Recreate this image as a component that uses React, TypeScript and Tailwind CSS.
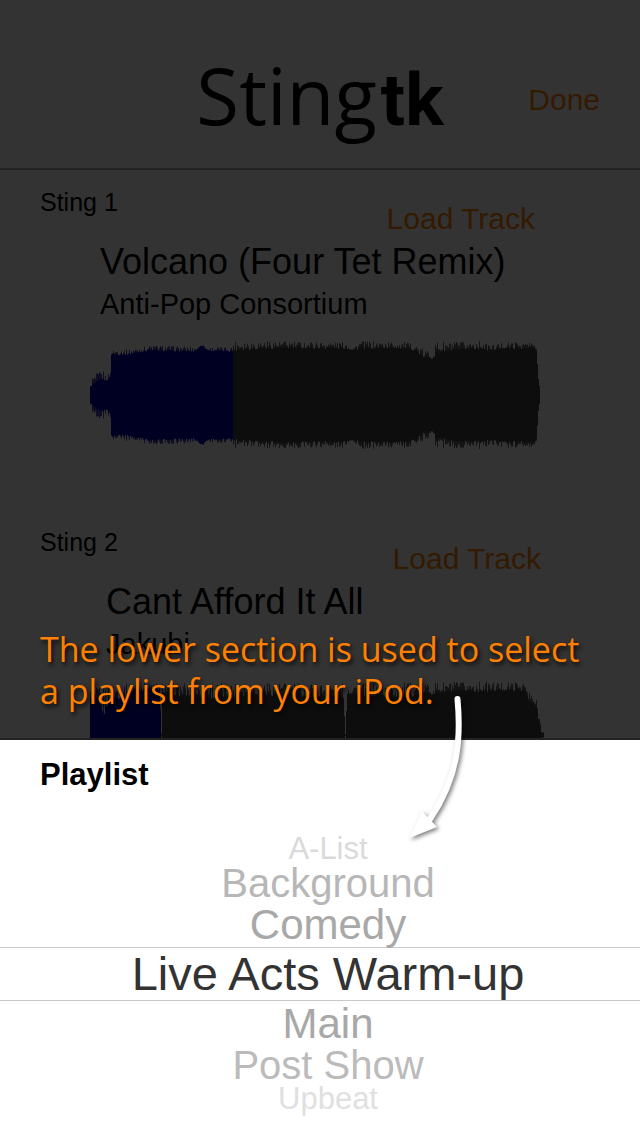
import React from "react";

type Level = [x: number, low: number, high: number];

const noise = (n: number) => {
  const v = Math.sin(n * 127.1 + 311.7) * 43758.5453;
  return v - Math.floor(v);
};

function wavePath(levels: Level[], from: number, to: number, mid: number, mix: number) {
  const top: string[] = [];
  const bottom: string[] = [];
  for (let x = from; x < to; x += 1) {
    let i = 0;
    while (i < levels.length - 2 && levels[i + 1][0] <= x) i += 1;
    const [x0, l0, h0] = levels[i];
    const [x1, l1, h1] = levels[i + 1];
    const t = (x - x0) / (x1 - x0);
    const low = l0 + (l1 - l0) * t;
    const high = h0 + (h1 - h0) * t;
    const peak = low + (high - low) * noise(x) * mix;
    top.push(`L${x} ${(mid - peak).toFixed(1)}L${x + 1} ${(mid - peak).toFixed(1)}`);
    bottom.unshift(`L${x + 1} ${(mid + peak).toFixed(1)}L${x} ${(mid + peak).toFixed(1)}`);
  }
  return `M${from} ${mid}${top.join("")}L${to} ${mid}${bottom.join("")}Z`;
}

const volcano: Level[] = [
  [0, 7, 10], [1, 8, 18], [8, 12, 23], [12, 14, 26], [16, 14, 18], [20, 18, 24],
  [21, 40, 45], [40, 40, 46], [52, 43, 48], [60, 44, 50], [104, 43, 48],
  [108, 46, 48], [110, 49, 50], [113, 49, 50], [116, 44, 48], [142, 43, 48],
  [143, 44, 54], [180, 46, 54], [255, 46, 53], [263, 44, 48], [270, 46, 54],
  [315, 46, 53], [325, 44, 50], [333, 36, 46], [343, 36, 44], [346, 41, 54],
  [360, 43, 53], [390, 46, 54], [400, 44, 50], [415, 46, 53], [444, 46, 53],
  [446, 42, 46], [448, 16, 18], [450, 1, 1],
];

const jakubi: Level[] = [
  [0, 35, 45], [8, 30, 48], [13, 15, 48], [18, 32, 50], [30, 36, 51], [45, 44, 52],
  [69, 44, 52], [71, 0, 2], [72, 42, 52], [100, 36, 52], [144, 36, 53],
  [160, 40, 53], [253, 36, 52], [255, 0, 2], [257, 40, 52], [300, 36, 52],
  [360, 42, 53], [434, 44, 53], [438, 32, 45], [442, 30, 40], [446, 24, 36],
  [451, 3, 8], [454, 1, 1],
];

function Waveform({ levels, played, width, label }: { levels: Level[]; played: number; width: number; label: string }) {
  return (
    <svg role="img" aria-label={label} width={width} height="112" viewBox={`0 0 ${width} 112`}>
      <path d={wavePath(levels, 0, played, 56, 1)} fill="#000090" opacity="0.7" />
      <path d={wavePath(levels, 0, played, 56, 0.3)} fill="#0000b0" />
      <path d={wavePath(levels, played, width, 56, 1)} fill="#404040" opacity="0.8" />
      <path d={wavePath(levels, played, width, 56, 0.3)} fill="#404040" />
    </svg>
  );
}

interface StingProps {
  name: string;
  title: string;
  artist: string;
  levels: Level[];
  played: number;
  width: number;
  indent: string;
}

function Sting({ name, title, artist, levels, played, width, indent }: StingProps) {
  return (
    <section className="h-[340px] shrink-0 pt-[18px] pl-10">
      <h2 className="h-4 text-[25px] leading-[28px]">{name}</h2>
      <div className="w-fit pl-[50px]">
        <div className="flex w-[451px] justify-end pr-[6px]">
          <button type="button" className={`text-[30px] leading-[30px] text-[#ff8000] ${indent}`}>Load Track</button>
        </div>
        <div className={`pl-[10px] ${indent}`}>
          <p className="text-4xl leading-[56px]">{title}</p>
          <p className="text-[29px] leading-[28px]">{artist}</p>
        </div>
        <div className="pt-[21px]">
          <Waveform levels={levels} played={played} width={width} label={`${title} waveform`} />
        </div>
      </div>
    </section>
  );
}

const playlists = [
  { name: "A-List", row: "h-[30px] text-[31px] text-[#dadada]" },
  { name: "Background", row: "h-[38px] text-[40px] text-[#b7b7b7]" },
  { name: "Comedy", row: "h-[45px] text-[42px] text-[#a8a8a8]" },
  { name: "Live Acts Warm-up", row: "h-[54px] border-y border-[#c8c8c8] text-[47px] text-[#333333]" },
  { name: "Main", row: "h-[44px] text-[42px] text-[#a8a8a8]" },
  { name: "Post Show", row: "h-[40px] text-[40px] text-[#bbbbbb]" },
  { name: "Upbeat", row: "h-[28px] text-[31px] text-[#e0e0e0]" },
];

export default function App() {
  return (
    <main className="relative flex h-screen flex-col overflow-hidden bg-white font-['Liberation_Sans',Arial,sans-serif] text-black">
      <div className="relative flex min-h-0 flex-1 flex-col overflow-hidden border-b-2 border-[#222222]">
        <header className="grid h-[170px] shrink-0 grid-cols-[1fr_auto_1fr] items-center border-b-2 border-[#aaaaaa] pt-8">
          <span />
          <h1 className="flex items-baseline gap-1 pb-1 whitespace-nowrap leading-[100px]">
            <span className="font-['Open_Sans',sans-serif] text-[78px]">Sting</span>
            <span className="font-['Roboto',sans-serif] text-[72px] font-bold">tk</span>
          </h1>
          <button type="button" className="justify-self-end pr-10 text-[30px] leading-9 text-[#ff8000]">Done</button>
        </header>
        <Sting name="Sting 1" title="Volcano (Four Tet Remix)" artist="Anti-Pop Consortium" levels={volcano} played={143} width={450} indent="ml-0" />
        <Sting name="Sting 2" title="Cant Afford It All" artist="Jakubi" levels={jakubi} played={71} width={454} indent="ml-[6px] -mr-[6px]" />
        <div className="absolute inset-0 bg-black/80" />
        <p className="absolute bottom-[26px] left-10 font-['Open_Sans',sans-serif] text-[34px] leading-[42px] text-[#ff8000] [text-shadow:2px_3px_4px_rgba(0,0,0,0.8)]">
          The lower section is used to select
          <br />a playlist from your iPod.
        </p>
      </div>

      <section className="relative h-[396px] shrink-0 pt-4" aria-label="Playlist">
        <h2 className="pl-10 text-[31px] leading-[38px] font-bold">Playlist</h2>
        <ul className="pt-10 text-center">
          {playlists.map((p) => (
            <li key={p.name} className={`flex items-center justify-center pl-4 whitespace-nowrap ${p.row}`}>{p.name}</li>
          ))}
        </ul>
        <svg aria-hidden="true" className="absolute -top-[60px] left-[390px] drop-shadow-[2px_2px_2px_rgba(0,0,0,0.5)]" width="90" height="170" viewBox="390 680 90 170">
          <path d="M457.500 699C461 737 459 776 430 819" fill="none" stroke="white" strokeWidth="6" strokeLinecap="round" />
          <path d="M409.500 838L422 811L437 827Z" fill="white" />
        </svg>
      </section>
    </main>
  );
}
